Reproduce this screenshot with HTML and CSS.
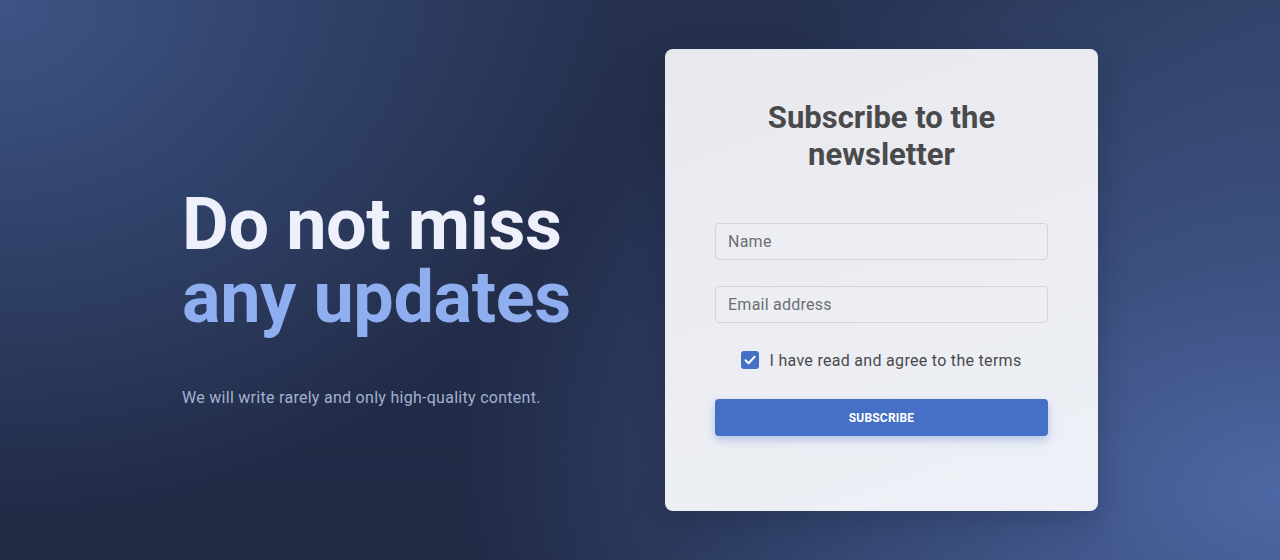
FILE: index.html
```html
<!DOCTYPE html>
<html lang="en">
<head>
<meta charset="utf-8">
<title>Newsletter</title>
<link rel="stylesheet" href="styles.css">
</head>
<body>
<main class="page">
  <section class="intro">
    <h1 class="headline"><span class="line-light">Do not miss</span><span class="line-accent">any updates</span></h1>
    <p class="lead">We will write rarely and only high-quality content.</p>
  </section>
  <form class="card" onsubmit="return false">
    <h2 class="card-title">Subscribe to the newsletter</h2>
    <input class="field" type="text" placeholder="Name">
    <input class="field" type="email" placeholder="Email address">
    <label class="agree">
      <span class="check"><svg viewBox="0 0 18 18" width="18" height="18"><path d="M4.5 9.3 L7.6 12.3 L13.6 5.8" fill="none" stroke="#fff" stroke-width="2" stroke-linecap="round" stroke-linejoin="round"/></svg></span>
      <span>I have read and agree to the terms</span>
    </label>
    <button class="btn" type="submit">SUBSCRIBE</button>
  </form>
</main>
</body>
</html>
```
FILE: styles.css
```css
* { box-sizing: border-box; }
html, body { margin: 0; height: 100%; }
body {
  font-family: Roboto, "Liberation Sans", Arial, sans-serif;
  background:
    radial-gradient(ellipse 620px 520px at 0% 0%, rgba(62, 86, 136, 0.95) 0%, rgba(62, 86, 136, 0) 100%),
    radial-gradient(ellipse 820px 560px at 100% 88%, rgba(78, 104, 165, 1) 0%, rgba(78, 104, 165, 0.6) 40%, rgba(78, 104, 165, 0) 100%),
    radial-gradient(ellipse 500px 300px at 100% 0%, rgba(48, 64, 100, 1) 0%, rgba(48, 64, 100, 0) 100%),
    linear-gradient(180deg, #25314f 0%, #222c48 60%, #202a45 100%);
  overflow: hidden;
}
.page {
  height: 560px;
  display: flex;
  align-items: center;
  padding-left: 182px;
}
.intro {
  width: 483px;
  padding-top: 34px;
}
.headline {
  margin: 0;
  font-size: 72px;
  line-height: 73px;
  font-weight: 700;
  letter-spacing: -0.4px;
}
.line-light { display: block; color: #eef1fb; }
.line-accent { display: block; color: #8eaef0; }
.lead {
  margin: 54px 0 0;
  font-size: 16px;
  letter-spacing: 0.28px;
  color: #a3b1cf;
}
.card {
  width: 433px;
  height: 462px;
  background: linear-gradient(160deg, #e8e9ef 0%, #eceef4 60%, #eef0f7 100%);
  border-radius: 8px;
  padding: 50px 50px 0;
  display: flex;
  flex-direction: column;
  box-shadow: 0 10px 30px rgba(10, 20, 40, 0.25);
}
.card-title {
  margin: 0 0 50px;
  text-align: center;
  font-size: 31px;
  line-height: 37px;
  font-weight: 700;
  color: #4a4a4c;
  padding: 0 40px;
}
.field {
  height: 37px;
  width: 100%;
  border: 1px solid #d3d5db;
  border-radius: 4px;
  background: #eceef3;
  padding: 0 12px;
  font: 16px Roboto, "Liberation Sans", Arial, sans-serif;
  letter-spacing: 0.25px;
  color: #333;
  margin-bottom: 26px;
}
.field::placeholder { color: #6d6e74; }
.agree {
  display: flex;
  align-items: center;
  justify-content: center;
  gap: 10px;
  font-size: 16px;
  letter-spacing: 0.3px;
  color: #4a4a4c;
  margin-top: 2px;
  height: 18px;
}
.check {
  width: 18px;
  height: 18px;
  border-radius: 3px;
  background: #4670c6;
  display: block;
}
.check svg { display: block; }
.btn {
  margin-top: 30px;
  height: 37px;
  width: 100%;
  border: 0;
  border-radius: 4px;
  background: #4670c6;
  color: #fff;
  font: 700 12px Roboto, "Liberation Sans", Arial, sans-serif;
  letter-spacing: 0.2px;
  box-shadow: 0 4px 10px rgba(70, 112, 198, 0.35);
}
```
